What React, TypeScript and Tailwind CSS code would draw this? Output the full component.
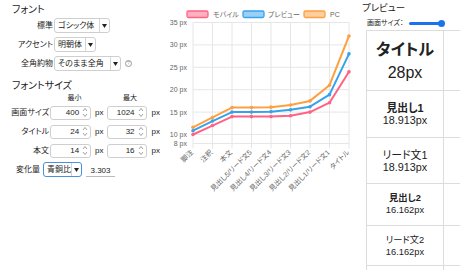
import React from "react";

const xs = [33, 52.5, 72, 91.5, 111, 130.5, 150, 169.5, 189];
const yOf = (v: number) => 22.5 + (35 - v) * 4.48;

const labels = [
  "脚注",
  "注釈",
  "本文",
  "見出し5/リード文5",
  "見出し4/リード文4",
  "見出し3/リード文3",
  "見出し2/リード文2",
  "見出し1/リード文1",
  "タイトル",
];

const series = [
  { name: "モバイル", color: "#ff6384", fill: "rgba(255,99,132,0.5)", data: [10, 12, 14, 14, 14, 14.2, 15, 17.1, 24] },
  { name: "プレビュー", color: "#36a2eb", fill: "rgba(54,162,235,0.5)", data: [10.85, 13, 15, 15, 15.1, 15.5, 16.2, 18.9, 28] },
  { name: "PC", color: "#ff9f40", fill: "rgba(255,159,64,0.5)", data: [11.6, 13.8, 16, 16, 16.1, 16.6, 17.5, 21, 32] },
];

const legend = [
  { x: 27, tx: 53 },
  { x: 83, tx: 108 },
  { x: 144, tx: 170 },
];

const Arrow = () => (
  <span className="flex w-[10px] h-full shrink-0 items-center justify-center border-l border-[#d4d4d4]">
    <svg width="5" height="4" viewBox="0 0 5 4">
      <path d="M0 0 L5 0 L2.5 4 Z" fill="#222" />
    </svg>
  </span>
);

const Select = ({ text, w, focus }: { text: string; w: string; focus?: boolean }) => (
  <div
    className={`flex h-[15px] items-center rounded-[3px] bg-white ${w} ${
      focus ? "border-[1.5px] border-[#4a90e2]" : "border border-[#cfcfcf]"
    }`}
  >
    <span className="flex-1 whitespace-nowrap pl-[3px] text-[8px] leading-[13px] text-[#222]">{text}</span>
    <Arrow />
  </div>
);

const Spinner = () => (
  <svg width="6" height="11" viewBox="0 0 6 11" className="shrink-0">
    <path d="M1 4 L3 1.5 L5 4" fill="none" stroke="#888" strokeWidth="0.8" />
    <path d="M1 7 L3 9.5 L5 7" fill="none" stroke="#888" strokeWidth="0.8" />
  </svg>
);

const NumInput = ({ value, w }: { value: string; w: string }) => (
  <div className={`flex h-[14px] items-center rounded-[3px] border border-[#cfcfcf] bg-white pr-[2px] ${w}`}>
    <span className="flex-1 pr-[3px] text-right text-[8px] leading-[12px] text-[#222]">{value}</span>
    <Spinner />
  </div>
);

const SizeRow = ({ label, min, max }: { label: string; min: string; max: string }) => (
  <div className="flex h-[19px] items-center whitespace-nowrap">
    <span className="w-[53px] text-right text-[8px] text-[#222]">{label}</span>
    <div className="ml-[1px]">
      <NumInput value={min} w="w-[41px]" />
    </div>
    <span className="ml-[4px] text-[8px] text-[#222]">px</span>
    <div className="ml-[3px]">
      <NumInput value={max} w="w-[40px]" />
    </div>
    <span className="ml-[5px] text-[8px] text-[#222]">px</span>
  </div>
);

const Chart = () => (
  <svg width="200" height="270" viewBox="0 0 200 270" className="shrink-0">
    {legend.map((l, i) => (
      <g key={i}>
        <rect x={l.x} y={11} width={21} height={6.5} rx={1.5} fill={series[i].fill} stroke={series[i].color} strokeWidth={1.3} />
        <text x={l.tx} y={17} fontSize="7" fill="#666">
          {series[i].name}
        </text>
      </g>
    ))}
    {[35, 30, 25, 20, 15, 10, 8].map((v) => (
      <g key={v}>
        <line x1={33} x2={189} y1={yOf(v)} y2={yOf(v)} stroke="#e6e6e6" strokeWidth="1" />
        <text x={27} y={yOf(v)} dy="2.5" fontSize="7" fill="#666" textAnchor="end">
          {v} px
        </text>
      </g>
    ))}
    {xs.map((x, i) => (
      <g key={i}>
        <line x1={x} x2={x} y1={yOf(35)} y2={yOf(8) + 5} stroke="#e6e6e6" strokeWidth="1" />
        <text transform={`translate(${x - 1},${151}) rotate(-45)`} fontSize="7" fill="#666" textAnchor="end" dy="2.5">
          {labels[i]}
        </text>
      </g>
    ))}
    {[...series].reverse().map((s) => (
      <g key={s.name}>
        <polyline
          points={s.data.map((v, i) => `${xs[i]},${yOf(v)}`).join(" ")}
          fill="none"
          stroke={s.color}
          strokeWidth="2"
          strokeLinejoin="round"
        />
        {s.data.map((v, i) => (
          <circle key={i} cx={xs[i]} cy={yOf(v)} r={1.8} fill={s.color} />
        ))}
      </g>
    ))}
  </svg>
);

const previewRows = [
  { h: "h-[60px]", a: "タイトル", b: "28px", bold: true, size: "text-[16px] leading-[23px]" },
  { h: "h-[47px]", a: "見出し1", b: "18.913px", bold: true, size: "text-[10.8px] leading-[12.5px]" },
  { h: "h-[46px]", a: "リード文1", b: "18.913px", bold: false, size: "text-[10.8px] leading-[12px]" },
  { h: "h-[42px]", a: "見出し2", b: "16.162px", bold: true, size: "text-[9.3px] leading-[11.5px]" },
  { h: "h-[40px]", a: "リード文2", b: "16.162px", bold: false, size: "text-[9.3px] leading-[12px]" },
  { h: "h-[40px]", a: "", b: "", bold: false, size: "text-[9px]" },
];

export default function App() {
  return (
    <div className="flex h-[270px] w-[460px] overflow-hidden bg-white font-['Liberation_Sans','Noto_Sans_CJK_JP',sans-serif] text-[#222] [font-feature-settings:'palt']">
      <div className="w-[160px] shrink-0">
        <div className="h-[16px] pl-[12px] pt-[4px] text-[10px] leading-[12px]">フォント</div>
        <div className="flex h-[19px] items-center">
          <span className="w-[53px] text-right text-[8px]">標準</span>
          <div className="ml-[1px]">
            <Select text="ゴシック体" w="w-[56px]" />
          </div>
        </div>
        <div className="flex h-[19px] items-center">
          <span className="w-[53px] text-right text-[8px]">アクセント</span>
          <div className="ml-[1px]">
            <Select text="明朝体" w="w-[42px]" />
          </div>
        </div>
        <div className="flex h-[19px] items-center">
          <span className="w-[53px] text-right text-[8px]">全角約物</span>
          <div className="ml-[1px]">
            <Select text="そのまま全角" w="w-[67px]" />
          </div>
          <span className="ml-[4px] flex h-[7px] w-[7px] items-center justify-center rounded-full border-[0.8px] border-[#999] text-[5px] leading-none text-[#999]">
            ?
          </span>
        </div>
        <div className="h-[20px] pl-[12px] pt-[7px] text-[10px] leading-[12px]">フォントサイズ</div>
        <div className="flex h-[10px] items-center text-[7px] leading-[10px]">
          <span className="ml-[54px] w-[41px] text-center">最小</span>
          <span className="ml-[15px] w-[40px] text-center">最大</span>
        </div>
        <SizeRow label="画面サイズ" min="400" max="1024" />
        <SizeRow label="タイトル" min="24" max="32" />
        <SizeRow label="本文" min="14" max="16" />
        <div className="flex h-[19px] items-center whitespace-nowrap pl-[16px]">
          <span className="w-[27px] text-[8px]">変化量</span>
          <Select text="青銅比" w="w-[39px]" focus />
          <span className="ml-[4px] mt-[3px] w-[29px] border-b border-[#bbb] text-center text-[8px] leading-[11px]">3.303</span>
        </div>
      </div>

      <Chart />

      <div className="w-[100px] shrink-0">
        <div className="h-[16px] pl-[2px] text-[9.5px] leading-[16px]">プレビュー</div>
        <div className="flex h-[14px] items-center whitespace-nowrap pl-[7px]">
          <span className="text-[7px]">画面サイズ：</span>
          <div className="relative ml-[5px] h-[3px] w-[33px] rounded-full bg-[#1a73e8]">
            <span className="absolute right-[-3px] top-[-2px] h-[7px] w-[7px] rounded-full bg-[#1a73e8]" />
          </div>
        </div>
        <div className="ml-[6px] w-[160px] border-l border-t border-[#dcdcdc]">
          {previewRows.map((r, i) => (
            <div key={i} className={`flex ${r.h}`}>
              <div className={`flex w-[77px] flex-col items-center justify-center whitespace-nowrap border-b border-r border-[#dcdcdc] ${r.size}`}>
                <span className={r.bold ? "font-bold" : ""}>{r.a}</span>
                <span>{r.b}</span>
              </div>
              <div className="flex-1 border-b border-[#dcdcdc]" />
            </div>
          ))}
        </div>
      </div>
    </div>
  );
}
